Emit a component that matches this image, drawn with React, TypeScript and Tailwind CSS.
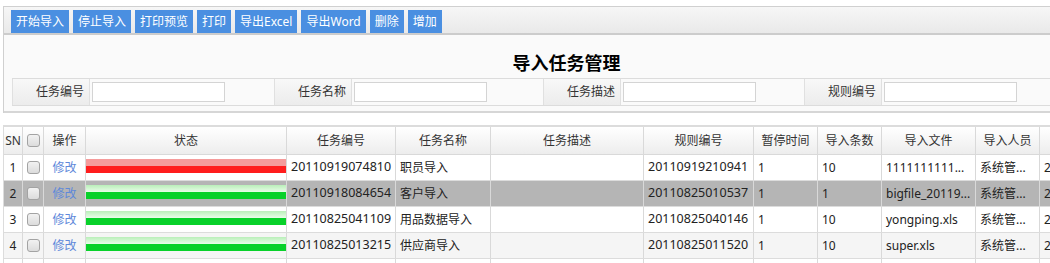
import { ReactNode } from "react";

const buttons = ["开始导入", "停止导入", "打印预览", "打印", "导出Excel", "导出Word", "删除", "增加"];

const fields = [
  { label: "任务编号", w: "w-[184px]" },
  { label: "任务名称", w: "w-[191px]" },
  { label: "任务描述", w: "w-[183px]" },
  { label: "规则编号", w: "w-[240px]" },
];

const cols = [
  { title: "SN", w: "w-[19px]" },
  { title: "", w: "w-[21px]" },
  { title: "操作", w: "w-[42px]" },
  { title: "状态", w: "w-[201px]" },
  { title: "任务编号", w: "w-[109px]" },
  { title: "任务名称", w: "w-[95px]" },
  { title: "任务描述", w: "w-[153px]" },
  { title: "规则编号", w: "w-[110px]" },
  { title: "暂停时间", w: "w-[64px]" },
  { title: "导入条数", w: "w-[64px]" },
  { title: "导入文件", w: "w-[94px]" },
  { title: "导入人员", w: "w-[64px]" },
  { title: "导入时间", w: "w-[130px]" },
];

const rows = [
  { sn: 1, ok: false, code: "20110919074810", name: "职员导入", rule: "20110919210941", pause: "1", count: "10", file: "1111111111...", user: "系统管...", time: "2011-09-19 21:09:41", bg: "bg-white" },
  { sn: 2, ok: true, code: "20110918084654", name: "客户导入", rule: "20110825010537", pause: "1", count: "1", file: "bigfile_20119...", user: "系统管...", time: "2011-09-18 08:46:54", bg: "bg-[#b5b5b5]" },
  { sn: 3, ok: true, code: "20110825041109", name: "用品数据导入", rule: "20110825040146", pause: "1", count: "10", file: "yongping.xls", user: "系统管...", time: "2011-08-25 04:11:09", bg: "bg-white" },
  { sn: 4, ok: true, code: "20110825013215", name: "供应商导入", rule: "20110825011520", pause: "1", count: "10", file: "super.xls", user: "系统管...", time: "2011-08-25 01:32:15", bg: "bg-[#f5f5f5]" },
  { sn: 5, ok: true, code: "", name: "", rule: "", pause: "", count: "", file: "", user: "", time: "", bg: "bg-white" },
];

function Checkbox() {
  return <span className="block w-[13px] h-[13px] rounded-[3px] border border-[#a3a3a3] bg-linear-to-b from-[#f2f2f2] to-[#dcdcdc]" />;
}

function Cell({ w, children, center }: { w: string; children?: ReactNode; center?: boolean }) {
  return (
    <div className={`${w} shrink-0 h-full border-r border-[#d9d9d9] flex items-center overflow-hidden whitespace-nowrap ${center ? "justify-center" : "pl-[4px]"}`}>
      {children}
    </div>
  );
}

function StatusBar({ ok }: { ok: boolean }) {
  return ok ? (
    <div className="w-full h-[14px] flex flex-col">
      <div className="h-[7px] bg-linear-to-b from-[#b9efb9] to-[#e9fde9]" />
      <div className="h-[7px] bg-[#08d12a]" />
    </div>
  ) : (
    <div className="w-full h-[14px] flex flex-col">
      <div className="h-[7px] bg-[#f59b9b]" />
      <div className="h-[7px] bg-[#ff1d1d]" />
    </div>
  );
}

export default function App() {
  return (
    <div className="w-[1050px] h-[263px] overflow-hidden bg-white text-[#222] font-['Noto_Sans','Noto_Sans_CJK_SC',sans-serif]">
      <div className="w-[1126px] ml-[3px] mt-[6px]">
        {/* 工具栏 */}
        <div className="border-t border-l border-[#d0d0d0]">
          <div className="h-[28px] pl-[7px] pt-[3px] flex gap-[4px] bg-linear-to-b from-[#f6f6f6] to-[#e9e9e9] border-b-2 border-[#cccccc]">
            {buttons.map((b) => (
              <button key={b} className="h-[23px] px-[5px] bg-[#4a8fe1] text-white text-[12px] leading-[23px]">
                {b}
              </button>
            ))}
          </div>
          {/* 查询面板 */}
          <div className="h-[78px] bg-[#fafafa] border-b-2 border-[#d6d6d6] pt-[16px]">
            <h1 className="text-center text-[18px] leading-[24px] font-bold text-black">导入任务管理</h1>
            <div className="mt-[3px] mx-[8px] h-[28px] flex border-y border-[#dcdcdc]">
              {fields.map((f) => (
                <div key={f.label} className="flex h-full">
                  <div className="w-[78px] h-full border-x border-[#e0e0e0] bg-linear-to-b from-[#f8f8f8] to-[#ececec] flex items-center justify-end pr-[5px] text-[12px] text-[#333]">
                    {f.label}
                  </div>
                  <div className={`${f.w} h-full flex items-center pl-[2px]`}>
                    <input type="text" className="w-[133px] h-[20px] bg-white border border-[#d4d4d4] outline-none" />
                  </div>
                </div>
              ))}
            </div>
          </div>
        </div>

        {/* 列表 */}
        <div className="mt-[12px] border-t-2 border-l border-[#dcdcdc] text-[12px]">
          <div className="h-[28px] flex border-b border-[#d9d9d9] bg-linear-to-b from-white to-[#ededed] text-[#333]">
            {cols.map((c, i) => (
              <Cell key={i} w={c.w} center>
                {i === 1 ? <Checkbox /> : c.title}
              </Cell>
            ))}
          </div>
          {rows.map((r) => (
            <div key={r.sn} className={`h-[26px] flex border-b border-[#dcdcdc] ${r.bg}`}>
              <Cell w={cols[0].w} center>{r.sn}</Cell>
              <Cell w={cols[1].w} center><Checkbox /></Cell>
              <Cell w={cols[2].w} center><span className="text-[#5f89da]">修改</span></Cell>
              <div className={`${cols[3].w} shrink-0 h-full border-r border-[#d9d9d9] pt-[4px]`}>
                <StatusBar ok={r.ok} />
              </div>
              <Cell w={cols[4].w}><span className="text-[12.5px]">{r.code}</span></Cell>
              <Cell w={cols[5].w}>{r.name}</Cell>
              <Cell w={cols[6].w} />
              <Cell w={cols[7].w}><span className="text-[12.5px]">{r.rule}</span></Cell>
              <Cell w={cols[8].w}>{r.pause}</Cell>
              <Cell w={cols[9].w}>{r.count}</Cell>
              <Cell w={cols[10].w}>{r.file}</Cell>
              <Cell w={cols[11].w}>{r.user}</Cell>
              <Cell w={cols[12].w}>{r.time}</Cell>
            </div>
          ))}
        </div>
      </div>
    </div>
  );
}
